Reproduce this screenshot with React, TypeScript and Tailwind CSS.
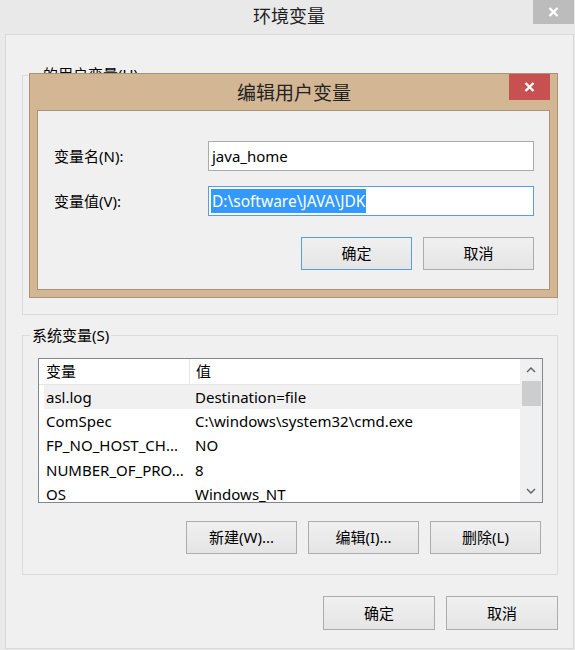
import React from "react";

const font = { fontFamily: '"Noto Sans", "Noto Sans CJK SC", sans-serif' };

function Btn({ children, className = "", focused = false }: { children: React.ReactNode; className?: string; focused?: boolean }) {
  return (
    <div
      className={
        "flex items-center justify-center border text-[15px] text-black bg-gradient-to-b from-[#f0f0f0] to-[#e5e5e5] " +
        (focused ? "border-[#5b9be0] " : "border-[#acacac] ") +
        className
      }
    >
      {children}
    </div>
  );
}

function ChevronUp() {
  return (
    <svg width="10" height="6" viewBox="0 0 10 6">
      <path d="M1 5 L5 1 L9 5" stroke="#606060" strokeWidth="1.4" fill="none" />
    </svg>
  );
}
function ChevronDown() {
  return (
    <svg width="10" height="6" viewBox="0 0 10 6">
      <path d="M1 1 L5 5 L9 1" stroke="#606060" strokeWidth="1.4" fill="none" />
    </svg>
  );
}
function XIcon({ color = "white" }: { color?: string }) {
  return (
    <svg width="11" height="10" viewBox="0 0 11 10">
      <path d="M1.5 1 L9.5 9 M9.5 1 L1.5 9" stroke={color} strokeWidth="2.4" fill="none" />
    </svg>
  );
}

const rows = [
  ["asl.log", "Destination=file"],
  ["ComSpec", "C:\\windows\\system32\\cmd.exe"],
  ["FP_NO_HOST_CH...", "NO"],
  ["NUMBER_OF_PRO...", "8"],
  ["OS", "Windows_NT"],
];

export default function App() {
  return (
    <div className="relative w-[575px] h-[650px] bg-[#e9e9e9] overflow-hidden text-black" style={font}>
      {/* Title bar */}
      <div className="h-[34px] flex items-center justify-center">
        <span className="text-[18px] text-[#1e1e1e] pl-[3px] pb-[1px]">环境变量</span>
      </div>
      <div className="absolute top-0 left-[533px] w-[41px] h-[24px] bg-[#bcbcbc] flex items-center justify-center">
        <XIcon />
      </div>

      {/* Client panel */}
      <div className="ml-[5px] w-[569px] h-[615px] border border-[#d9d9d9] bg-[#f0f0f0] flex flex-col">
        {/* User variables group */}
        <div className="relative ml-[16px] mt-[40px] w-[536px] h-[240px] border border-[#dcdcdc]">
          <span className="absolute left-[19px] top-[-12px] px-[1px] bg-[#f0f0f0] text-[15px] leading-[20px]">的用户变量(U)</span>
        </div>

        {/* System variables group */}
        <div className="relative ml-[16px] mt-[20px] w-[536px] h-[240px] border border-[#dcdcdc] flex flex-col">
          <span className="absolute left-[7px] top-[-11px] px-[2px] bg-[#f0f0f0] text-[15px] leading-[20px]">系统变量(S)</span>
          {/* List */}
          <div className="ml-[15px] mt-[22px] w-[505px] h-[145px] border border-[#828790] bg-white flex overflow-hidden">
            <div className="flex-1 flex flex-col">
              <div className="h-[26px] shrink-0 flex items-center text-[15px] border-b border-[#e5e5e5]">
                <div className="w-[151px] h-full pl-[7px] flex items-center border-r border-[#e5e5e5]">变量</div>
                <div className="pl-[6px]">值</div>
              </div>
              {rows.map((r, i) => (
                <div
                  key={r[0]}
                  className={"h-[24.25px] shrink-0 flex items-center text-[15px] ml-[5px] " + (i === 0 ? "bg-[#f0f0f0]" : "")}
                >
                  <div className="w-[150px] pl-[2px] whitespace-nowrap">{r[0]}</div>
                  <div className="pl-[1px] whitespace-nowrap">{r[1]}</div>
                </div>
              ))}
            </div>
            <div className="w-[22px] bg-[#f0f0f0] flex flex-col items-center">
              <div className="h-[22px] flex items-center justify-center"><ChevronUp /></div>
              <div className="w-[19px] h-[25px] bg-[#cdcdcd]" />
              <div className="flex-1" />
              <div className="h-[22px] flex items-center justify-center"><ChevronDown /></div>
            </div>
          </div>
          {/* Buttons */}
          <div className="mt-[18px] flex justify-end gap-[11px] pr-[16px]">
            <Btn className="w-[111px] h-[33px]">新建(W)...</Btn>
            <Btn className="w-[111px] h-[33px]">编辑(I)...</Btn>
            <Btn className="w-[111px] h-[33px]">删除(L)</Btn>
          </div>
        </div>

        {/* Bottom buttons */}
        <div className="mt-[21px] flex justify-end gap-[11px] pr-[15px]">
          <Btn className="w-[112px] h-[34px]">确定</Btn>
          <Btn className="w-[112px] h-[34px]">取消</Btn>
        </div>
      </div>

      {/* Edit dialog overlay */}
      <div className="absolute left-[29px] top-[73px] w-[529px] h-[225px] bg-[#d3b794] border border-[#a99373] flex flex-col">
        <div className="relative h-[36px] flex items-center justify-center">
          <span className="text-[19px] text-[#222] pl-[1px] pt-[2px]">编辑用户变量</span>
          <div className="absolute top-0 left-[479px] w-[41px] h-[26px] bg-[#c75050] flex items-center justify-center">
            <XIcon />
          </div>
        </div>
        <div className="ml-[7px] w-[513px] h-[180px] bg-[#f0f0f0] border border-[#a99373] flex flex-col">
          <div className="mt-[30px] flex items-center h-[30px]">
            <div className="w-[170px] pl-[16px] text-[15px]">变量名(N):</div>
            <div className="w-[326px] h-[30px] border border-[#ababab] bg-white flex items-center pl-[3px] text-[15px]">java_home</div>
          </div>
          <div className="mt-[15px] flex items-center h-[30px]">
            <div className="w-[170px] pl-[16px] text-[15px]">变量值(V):</div>
            <div className="w-[326px] h-[30px] border border-[#569de5] bg-white flex items-center pl-[2px] text-[15.5px]">
              <span className="bg-[#3399ff] text-white leading-[24px] px-[1px]">D:\software\JAVA\JDK</span>
            </div>
          </div>
          <div className="mt-[21px] flex justify-end gap-[11px] pr-[15px]">
            <Btn focused className="w-[111px] h-[33px]">确定</Btn>
            <Btn className="w-[111px] h-[33px]">取消</Btn>
          </div>
        </div>
      </div>
    </div>
  );
}
